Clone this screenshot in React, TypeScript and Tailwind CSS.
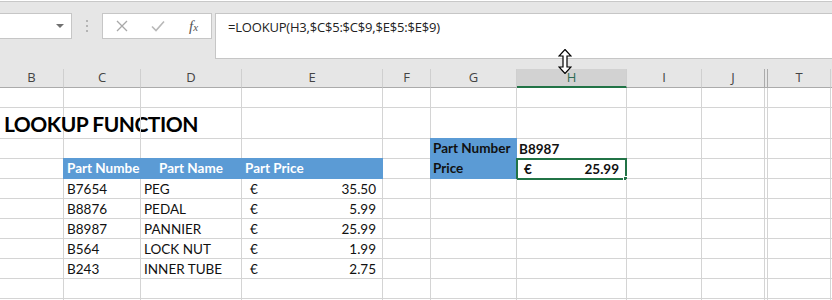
import React from "react";

type Col = { key: string; w: string; label: string };

const cols: Col[] = [
  { key: "B", w: "w-[64px]", label: "B" },
  { key: "C", w: "w-[77px]", label: "C" },
  { key: "D", w: "w-[101px]", label: "D" },
  { key: "E", w: "w-[141px]", label: "E" },
  { key: "F", w: "w-[48px]", label: "F" },
  { key: "G", w: "w-[86px]", label: "G" },
  { key: "H", w: "w-[110px]", label: "H" },
  { key: "I", w: "w-[75px]", label: "I" },
  { key: "J", w: "w-[63px]", label: "J" },
  { key: "hid", w: "w-[3px]", label: "" },
  { key: "T", w: "w-[63px]", label: "T" },
  { key: "U", w: "w-[64px]", label: "" },
];

const parts = [
  ["B7654", "PEG", "35.50"],
  ["B8876", "PEDAL", "5.99"],
  ["B8987", "PANNIER", "25.99"],
  ["B564", "LOCK NUT", "1.99"],
  ["B243", "INNER TUBE", "2.75"],
];

const cellFont = "font-['Lato','Open_Sans',sans-serif] text-[13.5px] text-[#111]";

// one empty cell per column, with optional override content
function Row({
  h,
  cells = {},
}: {
  h: string;
  cells?: Record<string, React.ReactNode>;
}) {
  return (
    <div className={`flex ${h}`}>
      {cols.map((c) => (
        <div
          key={c.key}
          className={`${c.w} shrink-0 border-r border-b border-[#d4d4d4] relative overflow-visible`}
        >
          {cells[c.key]}
        </div>
      ))}
    </div>
  );
}

function ResizeCursor() {
  return (
    <svg width="14" height="25" viewBox="0 0 14 25" className="absolute left-[558px] top-[49px]">
      <path
        d="M7 0.5 L13 7 L9 7 L9 18 L13 18 L7 24.5 L1 18 L5 18 L5 7 L1 7 Z"
        fill="#fff"
        stroke="#000"
        strokeWidth="1.2"
        strokeLinejoin="miter"
      />
    </svg>
  );
}

export default function App() {
  return (
    <div className="w-[832px] h-[300px] overflow-hidden bg-white relative">
      {/* formula bar area */}
      <div className="h-[68px] bg-[#e6e6e6] border-t border-[#c8c8c8] mt-[1px] relative flex items-start pt-[11px]">
        <div className="w-[72px] h-[26px] bg-white border border-[#c6c6c6] border-l-0 flex items-center justify-end pr-[7px]">
          <div className="w-0 h-0 border-l-[4px] border-r-[4px] border-t-[4px] border-l-transparent border-r-transparent border-t-[#707070]" />
        </div>
        <div className="w-[30px] flex flex-col items-center gap-[3px] pt-[7px]">
          <div className="w-[2px] h-[2px] bg-[#b4b4b4]" />
          <div className="w-[2px] h-[2px] bg-[#b4b4b4]" />
          <div className="w-[2px] h-[2px] bg-[#b4b4b4]" />
        </div>
        <div className="w-[110px] h-[26px] bg-white border border-[#c6c6c6] flex items-center">
          <svg width="12" height="12" viewBox="0 0 12 12" className="ml-[13px]">
            <path d="M1 1 L11 11 M11 1 L1 11" stroke="#a8a8a8" strokeWidth="1.3" />
          </svg>
          <svg width="14" height="12" viewBox="0 0 14 12" className="ml-[23px]">
            <path d="M1 6.5 L5 10.5 L13 1.5" stroke="#b8b8b8" strokeWidth="1.6" fill="none" />
          </svg>
          <span className="ml-[24px] font-['Liberation_Serif',serif] italic text-[15px] text-[#555] leading-none">
            f<span className="text-[11px]">x</span>
          </span>
        </div>
        <div className="ml-[3px] flex-1 h-[46px] bg-white border border-[#c6c6c6] border-r-0 pl-[12px] pt-[4px] font-['Open_Sans',sans-serif] text-[13px] text-[#222] tracking-[-0.2px]">
          =LOOKUP(H3,$C$5:$C$9,$E$5:$E$9)
        </div>
      </div>

      {/* column headers */}
      <div className="flex h-[19px] bg-[#e6e6e6]">
        {cols.map((c) => {
          const sel = c.key === "H";
          return (
            <div
              key={c.key}
              className={`${c.w} shrink-0 flex items-center justify-center font-['Open_Sans',sans-serif] text-[13px] border-r border-[#cfcfcf] ${
                sel
                  ? "bg-[#d2d2d2] text-[#2e6b54] border-b-2 border-b-[#217346]"
                  : "text-[#444] border-b border-b-[#ababab]"
              } ${c.key === "J" ? "border-r-[#ababab]" : ""} ${c.key === "hid" ? "bg-[#e6e6e6] border-r-[#ababab]" : ""}`}
            >
              {c.label}
            </div>
          );
        })}
      </div>

      {/* grid */}
      <div className={cellFont}>
        <Row h="h-[20px]" />
        <Row
          h="h-[31px]"
          cells={{
            B: (
              <span className="absolute left-[4px] top-0 whitespace-nowrap font-['Lato',sans-serif] font-bold text-[21px] tracking-[-0.5px] text-black">
                LOOKUP FUNCTION
              </span>
            ),
          }}
        />
        <Row
          h="h-[20px]"
          cells={{
            G: (
              <div className="absolute -left-px -top-px w-[87px] h-[21px] bg-[#5b9bd5] pl-[3px] font-bold leading-[21px] text-[#111] whitespace-nowrap">
                Part Number
              </div>
            ),
            H: <span className="absolute left-[2px] top-0 leading-[20px] font-bold">B8987</span>,
          }}
        />
        <Row
          h="h-[20px]"
          cells={{
            C: (
              <div className="absolute -left-px -top-px w-[77px] h-[21px] bg-[#5b9bd5] pl-[4px] font-bold leading-[21px] text-white whitespace-nowrap overflow-hidden">
                Part Number
              </div>
            ),
            D: (
              <div className="absolute -left-px -top-px w-[102px] h-[21px] bg-[#5b9bd5] font-bold leading-[21px] text-white text-center">
                Part Name
              </div>
            ),
            E: (
              <div className="absolute -left-px -top-px w-[142px] h-[21px] bg-[#5b9bd5] pl-[4px] font-bold leading-[21px] text-white">
                Part Price
              </div>
            ),
            G: (
              <div className="absolute -left-px -top-px w-[87px] h-[21px] bg-[#5b9bd5] pl-[3px] font-bold leading-[21px] text-[#111]">
                Price
              </div>
            ),
            H: (
              <div className="absolute -left-[1px] -top-[1px] w-[111px] h-[22px] border-2 border-[#217346] flex items-center justify-between pl-[6px] pr-[6px] font-bold bg-white">
                <span>€</span>
                <span>25.99</span>
                <div className="absolute -right-[3px] -bottom-[3px] w-[5px] h-[5px] bg-[#217346] border border-white" />
              </div>
            ),
          }}
        />
        {parts.map(([num, name, price]) => (
          <Row
            key={num}
            h="h-[20px]"
            cells={{
              C: <span className="absolute left-[3px] top-0 leading-[20px]">{num}</span>,
              D: <span className="absolute left-[3px] top-0 leading-[20px]">{name}</span>,
              E: (
                <div className="absolute inset-0 flex items-center justify-between pl-[8px] pr-[6px] leading-[20px]">
                  <span>€</span>
                  <span>{price}</span>
                </div>
              ),
            }}
          />
        ))}
        <Row h="h-[20px]" />
        <Row h="h-[20px]" />
      </div>

      <ResizeCursor />
    </div>
  );
}
